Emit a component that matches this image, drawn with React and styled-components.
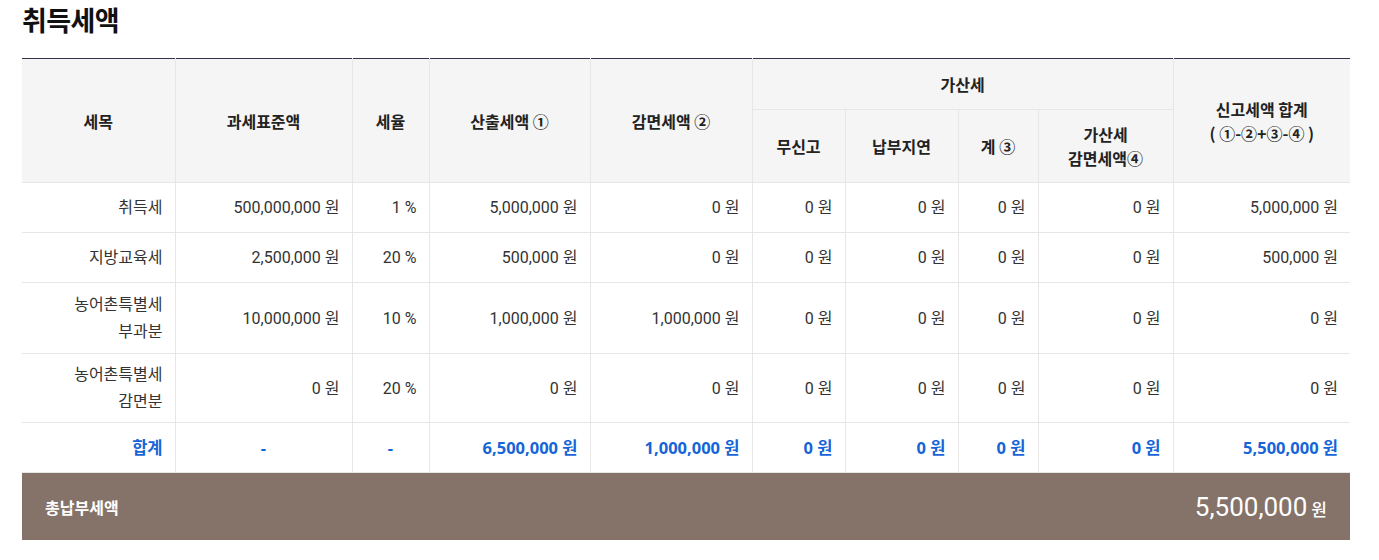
import React from "react";
import styled, { createGlobalStyle } from "styled-components";

const GlobalStyle = createGlobalStyle`
  *, *::before, *::after {
    box-sizing: border-box;
  }
  body {
    margin: 0;
    background: #fff;
    font-family: Roboto, "Noto Sans CJK KR", sans-serif;
    color: #333;
  }
`;

const Wrapper = styled.div`
  width: 1328px;
  margin-left: 22px;
`;

const Title = styled.h2`
  margin: 0 0 18px;
  font-family: "Noto Sans CJK KR", sans-serif;
  font-size: 27px;
  font-weight: 700;
  line-height: 40px;
  color: #111;
  letter-spacing: -0.6px;
`;

const Table = styled.table`
  width: 100%;
  border-collapse: collapse;
  table-layout: fixed;
  border-top: 1px solid #33334a;
`;

const Th = styled.th`
  height: ${(p) => p.$h || 51}px;
  padding: 0 8px;
  background: #f5f5f5;
  border: 1px solid #e6e6e6;
  border-top: none;
  font-family: "Noto Sans CJK KR", sans-serif;
  font-size: 16px;
  font-weight: 700;
  line-height: 24px;
  color: #222;
  text-align: center;
  vertical-align: middle;

  &:first-child {
    border-left: none;
  }
  &:last-child {
    border-right: none;
  }
`;

const Td = styled.td`
  height: 50px;
  padding: ${(p) => (p.$tight ? 7 : 8)}px 12px;
  border: 1px solid #e6e6e6;
  font-size: 16px;
  line-height: 27px;
  color: #333;
  text-align: ${(p) => p.$align || "right"};
  vertical-align: middle;

  &:first-child {
    border-left: none;
  }
  &:last-child {
    border-right: none;
  }
`;

const TotalTd = styled(Td)`
  font-family: "Noto Sans", "Noto Sans CJK KR", sans-serif;
  font-size: 16.5px;
  font-weight: 700;
  color: #1565d8;
`;

const Summary = styled.div`
  display: flex;
  align-items: center;
  justify-content: space-between;
  height: 67px;
  padding: 0 23px;
  background: #857369;
  color: #fff;
`;

const SummaryLabel = styled.span`
  font-family: "Noto Sans CJK KR", sans-serif;
  font-size: 16px;
  font-weight: 700;
`;

const SummaryAmount = styled.span`
  display: flex;
  align-items: baseline;
  gap: 4px;
  font-size: 26px;
  font-family: Roboto, sans-serif;
`;

const Unit = styled.span`
  font-family: "Noto Sans CJK KR", sans-serif;
  font-size: 17px;
  font-weight: 500;
`;

const widths = [153, 177, 77, 161, 162, 93, 113, 80, 135, 177];

const rows = [
  { name: ["취득세"], vals: ["500,000,000 원", "1 %", "5,000,000 원", "0 원", "0 원", "0 원", "0 원", "0 원", "5,000,000 원"] },
  { name: ["지방교육세"], vals: ["2,500,000 원", "20 %", "500,000 원", "0 원", "0 원", "0 원", "0 원", "0 원", "500,000 원"] },
  { name: ["농어촌특별세", "부과분"], vals: ["10,000,000 원", "10 %", "1,000,000 원", "1,000,000 원", "0 원", "0 원", "0 원", "0 원", "0 원"] },
  { name: ["농어촌특별세", "감면분"], tight: true, vals: ["0 원", "20 %", "0 원", "0 원", "0 원", "0 원", "0 원", "0 원", "0 원"] },
];

const totals = ["6,500,000 원", "1,000,000 원", "0 원", "0 원", "0 원", "0 원", "5,500,000 원"];

export default function App() {
  return (
    <>
      <GlobalStyle />
      <Wrapper>
        <Title>취득세액</Title>
        <Table>
          <colgroup>
            {widths.map((w, i) => (
              <col key={i} style={{ width: w }} />
            ))}
          </colgroup>
          <thead>
            <tr>
              <Th rowSpan={2}>세목</Th>
              <Th rowSpan={2}>과세표준액</Th>
              <Th rowSpan={2}>세율</Th>
              <Th rowSpan={2}>산출세액 ①</Th>
              <Th rowSpan={2}>감면세액 ②</Th>
              <Th colSpan={4} $h={51}>가산세</Th>
              <Th rowSpan={2}>
                신고세액 합계
                <br />( ①-②+③-④ )
              </Th>
            </tr>
            <tr>
              <Th $h={73}>무신고</Th>
              <Th $h={73}>납부지연</Th>
              <Th $h={73}>계 ③</Th>
              <Th $h={73}>
                가산세
                <br />
                감면세액④
              </Th>
            </tr>
          </thead>
          <tbody>
            {rows.map((r, i) => (
              <tr key={i}>
                <Td $tight={r.tight}>
                  {r.name.map((n, j) => (
                    <React.Fragment key={j}>
                      {j > 0 && <br />}
                      {n}
                    </React.Fragment>
                  ))}
                </Td>
                {r.vals.map((v, j) => (
                  <Td key={j} $tight={r.tight}>{v}</Td>
                ))}
              </tr>
            ))}
            <tr>
              <TotalTd>합계</TotalTd>
              <TotalTd $align="center">-</TotalTd>
              <TotalTd $align="center">-</TotalTd>
              {totals.map((v, j) => (
                <TotalTd key={j}>{v}</TotalTd>
              ))}
            </tr>
          </tbody>
        </Table>
        <Summary>
          <SummaryLabel>총납부세액</SummaryLabel>
          <SummaryAmount>
            5,500,000
            <Unit>원</Unit>
          </SummaryAmount>
        </Summary>
      </Wrapper>
    </>
  );
}
